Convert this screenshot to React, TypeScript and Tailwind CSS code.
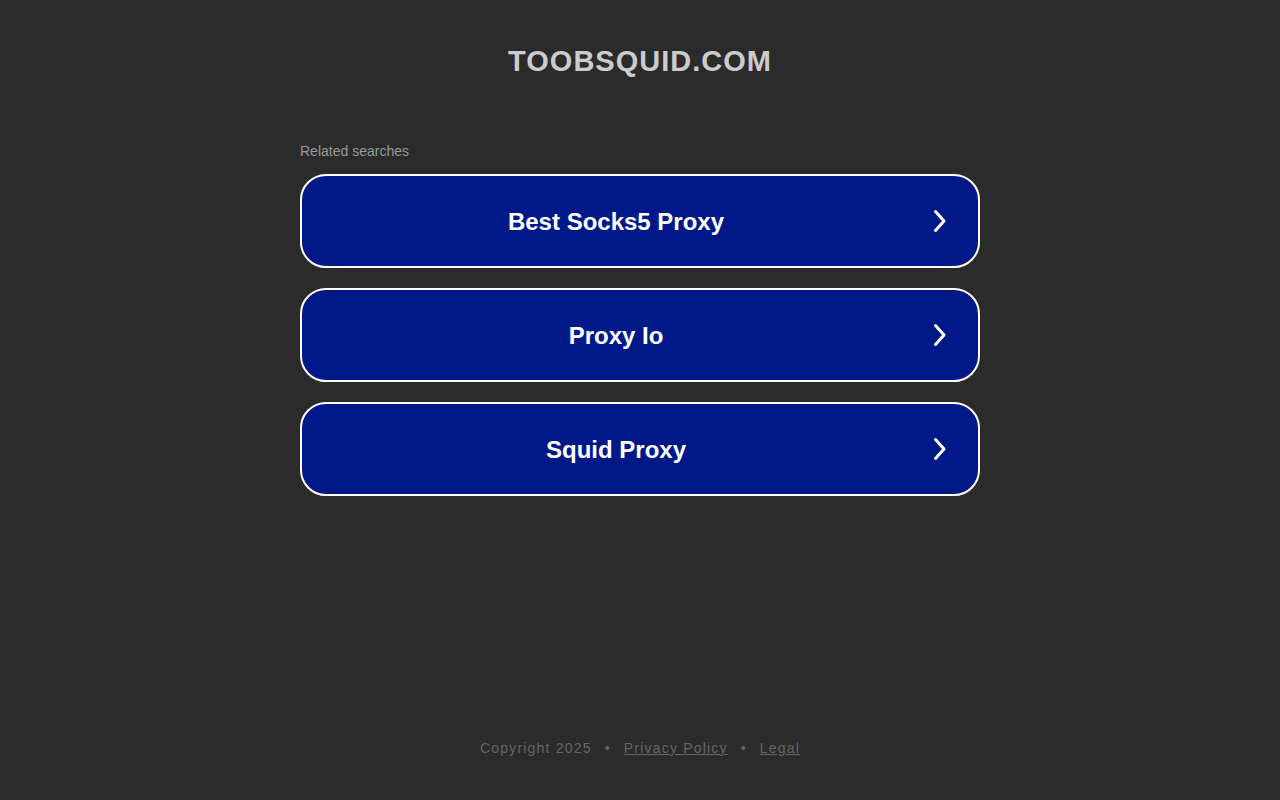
import React from "react";

const items = ["Best Socks5 Proxy", "Proxy Io", "Squid Proxy"];

function Chevron() {
  return (
    <svg width="16" height="24" viewBox="0 0 16 24" fill="none">
      <path d="M3.5 2.5 L12 12 L3.5 21.5" stroke="white" strokeWidth="3" strokeLinecap="round" strokeLinejoin="round" />
    </svg>
  );
}

export default function App() {
  return (
    <div className="min-h-[800px] w-full bg-[#2b2b2b] flex flex-col items-center" style={{ fontFamily: '"Liberation Sans", Arial, sans-serif' }}>
      <h1 className="mt-[42px] h-[38px] text-[29px] leading-[38px] font-bold tracking-[1px] text-[#cccccc]">TOOBSQUID.COM</h1>
      <div className="mt-[63px] w-[680px] flex flex-col">
        <div className="text-[14px] leading-[16px] text-[#999999] mb-[15px]">Related searches</div>
        <div className="flex flex-col gap-[20px]">
          {items.map((t) => (
            <div key={t} className="h-[94px] rounded-[26px] border-2 border-white bg-[#011888] flex items-center">
              <div className="flex-1 text-center pl-[28px] pt-[2px] text-[24px] font-bold text-white">{t}</div>
              <div className="w-[76px] flex justify-center"><Chevron /></div>
            </div>
          ))}
        </div>
      </div>
      <div className="mt-auto mb-[41px] flex items-center text-[14px] tracking-[1.2px] text-[#666666]">
        <span>Copyright 2025</span>
        <span className="mx-[13px]">•</span>
        <span className="underline">Privacy Policy</span>
        <span className="mx-[13px]">•</span>
        <span className="underline">Legal</span>
      </div>
    </div>
  );
}
